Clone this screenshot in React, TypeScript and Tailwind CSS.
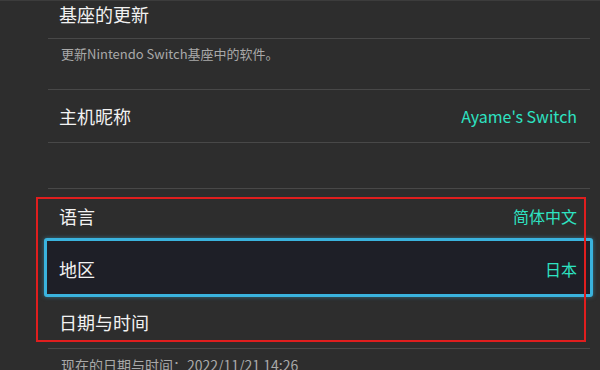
import React from 'react';

const FONT = { fontFamily: '"Noto Sans CJK SC", "Noto Sans", sans-serif' };

function Divider() {
    return <div className="h-px bg-[#484848]" />;
}

function SettingRow({ label, value, selected }: { label: string; value?: string; selected?: boolean }) {
    return (
        <div className="relative h-[53px] flex items-center justify-between pl-[11px] pr-[13px]">
            {selected && (
                <div className="absolute -top-[4px] -bottom-[2px] -left-[4px] -right-[3px] rounded-[3px] border-[3px] border-[#3ab3de] bg-[#1e1f27] shadow-[0_0_4px_rgba(58,179,222,0.5)]" />
            )}
            <span className="relative text-[18px] leading-[26px] text-[#f2f2f2]">{label}</span>
            {value && <span className="relative text-[16px] leading-[24px] text-[#2de3c2]">{value}</span>}
        </div>
    );
}

export default function App() {
    return (
        <div className="relative w-[600px] h-[370px] overflow-hidden bg-[#2d2d2d] border-t border-[#3c3c3c]" style={FONT}>
            <div className="flex flex-col pl-[48px] pr-[10px]">
                {/* Dock update */}
                <div className="h-[37px] pl-[11px]">
                    <span className="block text-[18px] leading-[26px] text-[#f2f2f2]">基座的更新</span>
                </div>
                <Divider />
                <div className="h-[50px] pl-[13px] pt-[6px]">
                    <p className="text-[13px] leading-[18px] text-[#a9a9a9]">更新Nintendo Switch基座中的软件。</p>
                </div>
                <Divider />

                {/* Console nickname */}
                <div className="h-[52px] flex items-center justify-between pl-[11px] pr-[13px]">
                    <span className="text-[18px] leading-[26px] text-[#f2f2f2]">主机昵称</span>
                    <span className="text-[16px] leading-[24px] text-[#2de3c2]">Ayame's Switch</span>
                </div>
                <Divider />
                <div className="h-[45px]" />
                <Divider />

                {/* Language / region / date */}
                <SettingRow label="语言" value="简体中文" />
                <SettingRow label="地区" value="日本" selected />
                <SettingRow label="日期与时间" />
                <Divider />
                <div className="pl-[13px] pt-[6px]">
                    <p className="text-[14px] leading-[20px] text-[#a9a9a9]">现在的日期与时间：2022/11/21 14:26</p>
                </div>
            </div>

            {/* Annotation box */}
            <div className="absolute left-[36px] top-[196px] w-[550px] h-[145px] border-2 border-[#e01e1e] pointer-events-none" />
        </div>
    );
}
